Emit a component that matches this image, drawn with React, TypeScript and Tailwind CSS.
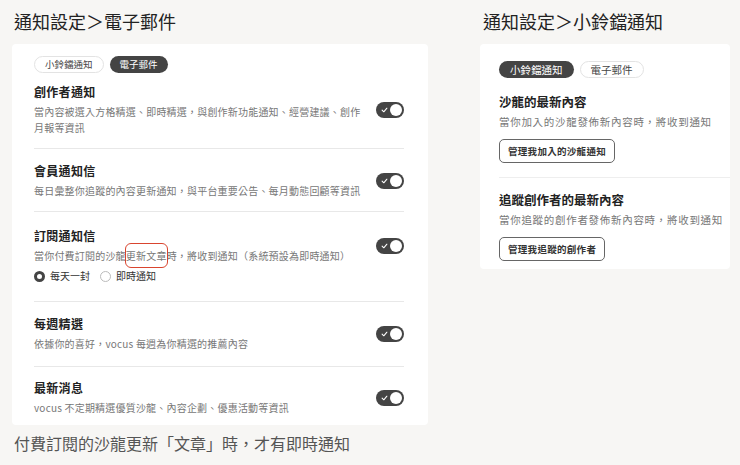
import React from "react";

const font = { fontFamily: '"Noto Sans CJK TC", "Noto Sans", sans-serif' };

function Toggle() {
  return (
    <div className="relative h-[16px] w-[28px] shrink-0 rounded-full bg-[#444444]">
      <svg viewBox="0 0 10 10" className="absolute left-[5px] top-[5px] h-[6px] w-[7px]">
        <path d="M1 5.2 L3.8 8 L9 2" fill="none" stroke="white" strokeWidth="1.8" strokeLinecap="round" strokeLinejoin="round" />
      </svg>
      <div className="absolute right-[2px] top-[2px] h-[12px] w-[12px] rounded-full bg-white" />
    </div>
  );
}

function Item({ title, desc, children, className }: { title: string; desc: React.ReactNode; children?: React.ReactNode; className: string }) {
  return (
    <div className={className}>
      <div className="flex items-center justify-between">
        <div className="flex flex-col">
          <div className="text-[12px] font-bold leading-[18px] tracking-[0.3px] text-[#222]">{title}</div>
          <div className="mt-[3px] w-[330px] text-[10px] leading-[16px] tracking-[0.2px] text-[#777]">{desc}</div>
        </div>
        <Toggle />
      </div>
      {children}
    </div>
  );
}

export default function App() {
  return (
    <div className="flex h-[465px] w-[740px] bg-[#f7f6f4] text-[#222]" style={font}>
      <div className="flex w-[480px] shrink-0 flex-col pl-[12px]">
        <h1 className="ml-[2px] mt-[8px] text-[18px] leading-[26px] text-[#222]">通知設定＞電子郵件</h1>
        <div className="mt-[10px] w-[416px] rounded-[4px] bg-white pl-[22px] pr-[24px] pt-[12px]">
          <div className="flex gap-[6px]">
            <div className="flex h-[17px] items-center rounded-full border border-[#e3e3e3] px-[10px] text-[9.5px] text-[#444]">小鈴鐺通知</div>
            <div className="flex h-[17px] items-center rounded-full bg-[#444] px-[10px] text-[9.5px] text-white">電子郵件</div>
          </div>
          <div className="mt-[10px]">
            <Item className="border-b border-[#e8e8e8] pb-[12px]" title="創作者通知" desc="當內容被選入方格精選、即時精選，與創作新功能通知、經營建議、創作月報等資訊" />
            <Item className="border-b border-[#e8e8e8] pb-[12px] pt-[13px]" title="會員通知信" desc="每日彙整你追蹤的內容更新通知，與平台重要公告、每月動態回顧等資訊" />
            <Item
              className="border-b border-[#e8e8e8] pb-[17px] pt-[15px]"
              title="訂閱通知信"
              desc={
                <span className="whitespace-nowrap">
                  當你付費訂閱的沙龍
                  <span className="relative">
                    更新文章
                    <span className="absolute -inset-x-[1px] -inset-y-[5px] rounded-[6px] border-[1.5px] border-solid border-[#d9452f]" />
                  </span>
                  時，將收到通知（系統預設為即時通知）
                </span>
              }
            >
              <div className="mt-[4px] flex items-center gap-[10px] text-[10px] leading-[16px] text-[#333]">
                <div className="flex items-center gap-[5px]">
                  <div className="h-[11px] w-[11px] rounded-full border-[3px] border-[#444] bg-white" />
                  每天一封
                </div>
                <div className="flex items-center gap-[5px]">
                  <div className="h-[11px] w-[11px] rounded-full border border-[#bbb]" />
                  即時通知
                </div>
              </div>
            </Item>
            <Item className="border-b border-[#e8e8e8] pb-[14px] pt-[13px]" title="每週精選" desc="依據你的喜好，vocus 每週為你精選的推薦內容" />
            <Item className="pb-[9px] pt-[12px]" title="最新消息" desc="vocus 不定期精選優質沙龍、內容企劃、優惠活動等資訊" />
          </div>
        </div>
        <div className="ml-[2px] mt-[6px] text-[16px] leading-[24px] text-[#555]">付費訂閱的沙龍更新「文章」時，才有即時通知</div>
      </div>
      <div className="flex flex-col">
        <h1 className="ml-[3px] mt-[8px] text-[18px] leading-[26px] text-[#222]">通知設定＞小鈴鐺通知</h1>
        <div className="mt-[10px] w-[250px] rounded-[4px] bg-white pb-[8px] pl-[19px] pt-[17px]">
          <div className="flex gap-[6px]">
            <div className="flex h-[17px] items-center rounded-full bg-[#444] px-[11px] text-[10.5px] text-white">小鈴鐺通知</div>
            <div className="flex h-[17px] items-center rounded-full border border-[#e3e3e3] px-[10px] text-[10.5px] text-[#444]">電子郵件</div>
          </div>
          <div className="border-b border-[#eee] pb-[14px] pt-[15px]">
            <div className="text-[12.5px] font-bold leading-[18px]">沙龍的最新內容</div>
            <div className="mt-[3px] text-[10.5px] leading-[16px] tracking-[0.7px] text-[#777]">當你加入的沙龍發佈新內容時，將收到通知</div>
            <div className="mt-[9px] inline-flex h-[24px] items-center rounded-[5px] border border-[#666] px-[8px] text-[9.5px] font-bold tracking-[0.3px] text-[#333]">管理我加入的沙龍通知</div>
          </div>
          <div className="pt-[13px]">
            <div className="text-[12.5px] font-bold leading-[18px]">追蹤創作者的最新內容</div>
            <div className="mt-[3px] whitespace-nowrap text-[10.5px] leading-[16px] tracking-[0.7px] text-[#777]">當你追蹤的創作者發佈新內容時，將收到通知</div>
            <div className="mt-[9px] inline-flex h-[24px] items-center rounded-[5px] border border-[#666] px-[8px] text-[9.5px] font-bold tracking-[0.3px] text-[#333]">管理我追蹤的創作者</div>
          </div>
        </div>
      </div>
    </div>
  );
}
